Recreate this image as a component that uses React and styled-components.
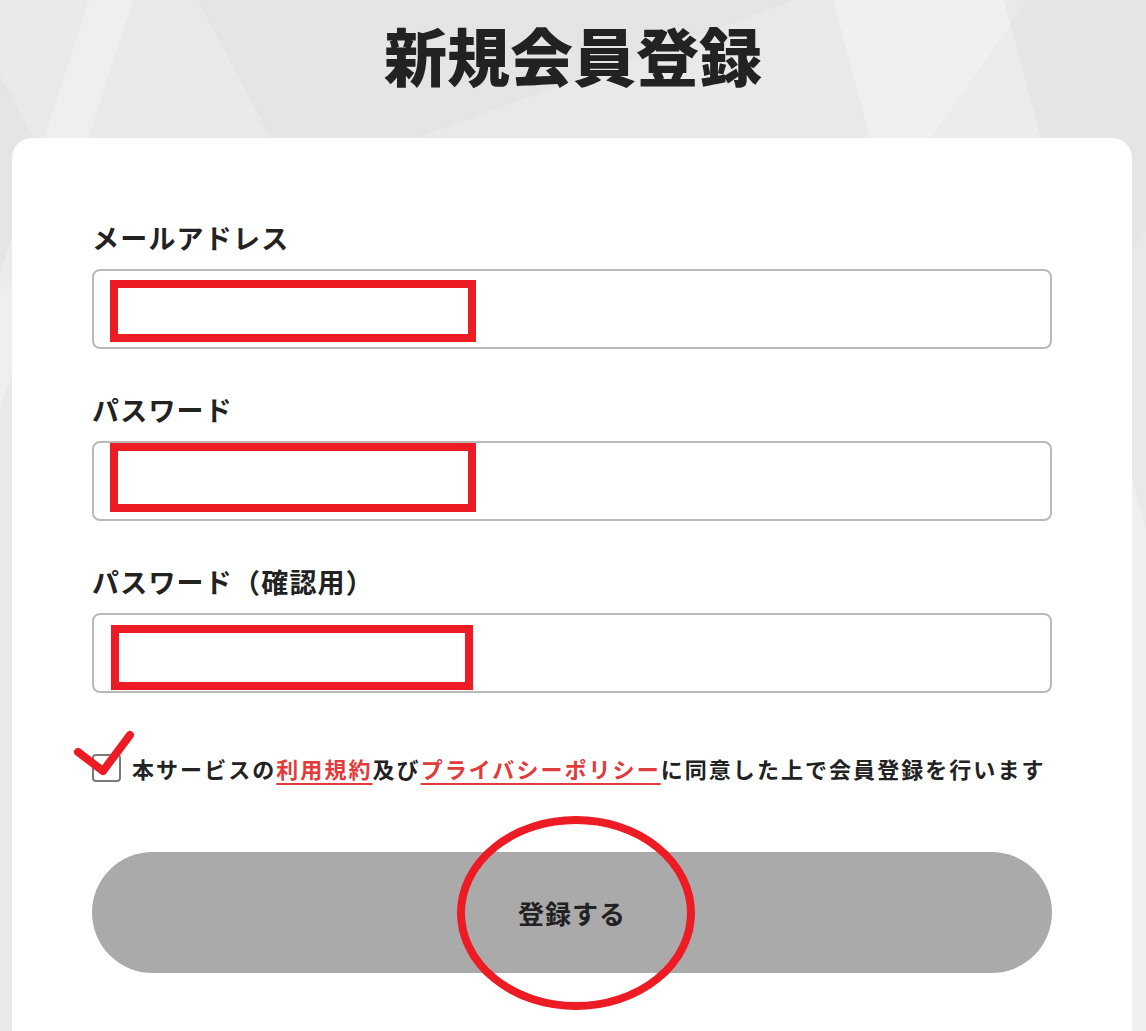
import React from "react";
import styled, { createGlobalStyle } from "styled-components";

const Global = createGlobalStyle`
  html, body { margin: 0; padding: 0; }
  body {
    font-family: "Noto Sans CJK JP", "Noto Sans", sans-serif;
    color: #222;
    overflow: hidden;
  }
`;

const Page = styled.div`
  position: relative;
  width: 1146px;
  height: 1031px;
  overflow: hidden;
  background:
    linear-gradient(108deg, transparent 0 6%, rgba(255,255,255,0.25) 6% 9%, transparent 9% 100%),
    linear-gradient(62deg, transparent 0 30%, rgba(255,255,255,0.2) 30% 44%, transparent 44% 100%),
    linear-gradient(125deg, transparent 0 55%, rgba(0,0,0,0.015) 55% 70%, transparent 70% 100%),
    linear-gradient(75deg, transparent 0 78%, rgba(255,255,255,0.3) 78% 90%, transparent 90% 100%),
    linear-gradient(160deg, rgba(0,0,0,0.02) 0 20%, transparent 20% 100%),
    #e9e9e9;
`;

const Title = styled.h1`
  margin: 0;
  padding-top: 16px;
  height: 138px;
  box-sizing: border-box;
  text-align: center;
  font-size: 63px;
  line-height: 76px;
  font-weight: 900;
  color: #222;
`;

const Card = styled.div`
  margin-left: 12px;
  width: 1120px;
  box-sizing: border-box;
  background: #fff;
  border-radius: 20px;
  padding: 80px 80px 90px;
  display: flex;
  flex-direction: column;
`;

const Field = styled.div`
  display: flex;
  flex-direction: column;
  gap: 12px;
  margin-bottom: 41px;
`;

const Label = styled.label`
  font-size: 27px;
  line-height: 39px;
  font-weight: 700;
  color: #222;
  letter-spacing: 1.2px;
`;

const Input = styled.input`
  box-sizing: border-box;
  width: 960px;
  height: 80px;
  border: 2px solid #b9b9b9;
  border-radius: 8px;
  background: #fff;
  font-size: 24px;
  padding: 0 18px;
  outline: none;
`;

const AgreeRow = styled.div`
  display: flex;
  align-items: center;
  gap: 11px;
  margin-top: 19px;
  height: 30px;
`;

const Box = styled.span`
  box-sizing: border-box;
  width: 29px;
  height: 28px;
  border: 2px solid #7a7a7a;
  border-radius: 4px;
  background: #fff;
  flex: none;
`;

const AgreeText = styled.span`
  font-size: 22px;
  line-height: 30px;
  font-weight: 700;
  color: #222;
  letter-spacing: 2.05px;
  white-space: nowrap;
`;

const Link = styled.a`
  color: #e23b3b;
  text-decoration: underline;
  text-decoration-thickness: 2px;
  text-underline-offset: 5px;
`;

const Submit = styled.button`
  margin-top: 69px;
  width: 960px;
  height: 121px;
  border: none;
  border-radius: 61px;
  background: #aaaaaa;
  color: #222;
  font-family: inherit;
  font-size: 26px;
  font-weight: 700;
  letter-spacing: 1px;
`;

const Marks = styled.svg`
  position: absolute;
  left: 0;
  top: 0;
  pointer-events: none;
`;

const RED = "#ed1c24";

export default function App() {
  return (
    <Page>
      <Global />
      <Title>新規会員登録</Title>
      <Card>
        <Field>
          <Label>メールアドレス</Label>
          <Input type="email" />
        </Field>
        <Field>
          <Label>パスワード</Label>
          <Input type="password" />
        </Field>
        <Field>
          <Label>パスワード（確認用）</Label>
          <Input type="password" />
        </Field>
        <AgreeRow>
          <Box />
          <AgreeText>
            本サービスの<Link>利用規約</Link>及び<Link>プライバシーポリシー</Link>に同意した上で会員登録を行います
          </AgreeText>
        </AgreeRow>
        <Submit>登録する</Submit>
      </Card>
      <Marks width="1146" height="1031" viewBox="0 0 1146 1031">
        <g fill="none" stroke={RED} strokeWidth="8">
          <rect x="114" y="284" width="358" height="54" />
          <rect x="114" y="447" width="358" height="61" />
          <rect x="115" y="629" width="354" height="57" />
          <ellipse cx="576" cy="913" rx="115" ry="93" />
          <polyline points="78,752 103,771 130,735" strokeLinecap="round" strokeLinejoin="round" />
        </g>
      </Marks>
    </Page>
  );
}
